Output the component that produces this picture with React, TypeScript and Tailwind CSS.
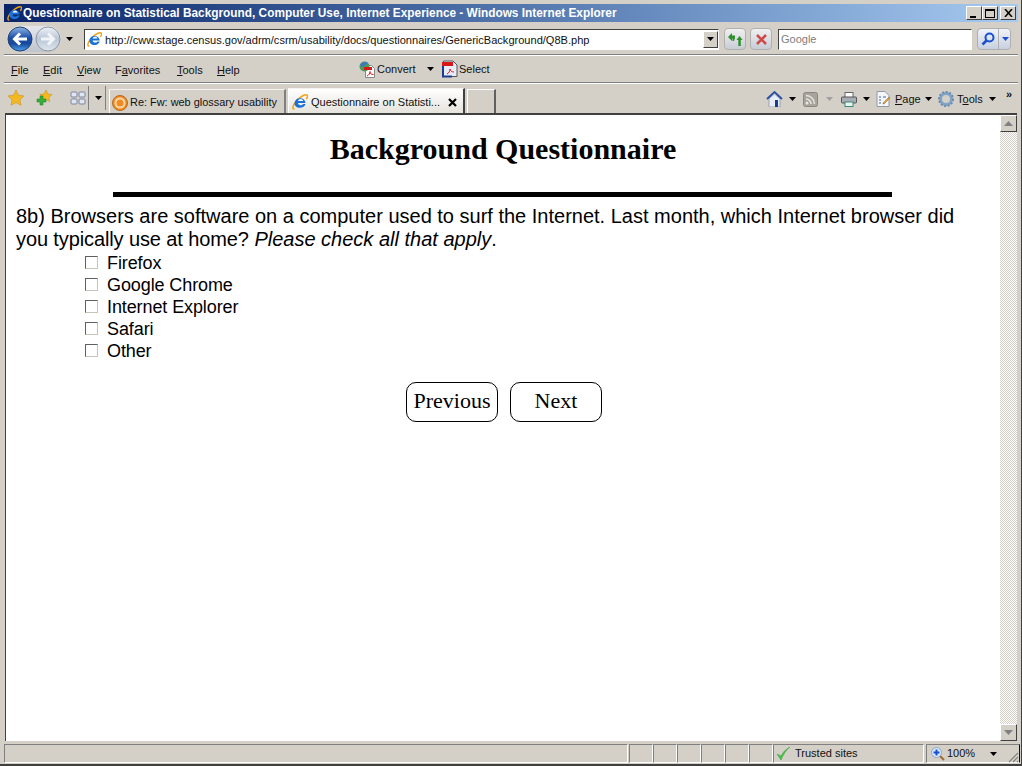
import React from "react";

const ui = "font-['Liberation_Sans',Arial,sans-serif]";

function IeLogo({ size = 16 }: { size?: number }) {
  return (
    <svg width={size} height={size} viewBox="0 0 16 16" className="shrink-0">
      <path d="M2.500 14.800C.2 15.400.4 12.500 2.800 9 5.800 4.600 11.500.4 14.600.9c1.500.3 1.100 2.200-.3 4.300" fill="none" stroke="#f0a010" strokeWidth="1.500" />
      <path d="M2.600 8.800A5.600 5.600 0 0 1 13.600 9H6c.3 2.600 3.600 3 5.200 1h2.400c-1.900 5.600-11.700 5-11-1.200z" fill="#1b72d6" />
      <path d="M6 7h5.200C10.800 4.300 6.500 4.300 6 7z" fill="#fff" />
    </svg>
  );
}

function Caret({ color = "#000", className = "" }: { color?: string; className?: string }) {
  return (
    <svg width="7" height="4" viewBox="0 0 7 4" className={`shrink-0 ${className}`}>
      <path d="M0 0h7L3.500 4z" fill={color} />
    </svg>
  );
}

function NavButton({ active }: { active: boolean }) {
  return (
    <svg width="26" height="26" viewBox="0 0 26 26" className="shrink-0">
      <defs>
        <linearGradient id="navB" x1="0" y1="0" x2="0" y2="1">
          <stop offset="0" stopColor="#8fb4e4" />
          <stop offset="0.45" stopColor="#1c4fa8" />
          <stop offset="0.7" stopColor="#174a9c" />
          <stop offset="1" stopColor="#4ea2ee" />
        </linearGradient>
        <linearGradient id="navG" x1="0" y1="0" x2="0" y2="1">
          <stop offset="0" stopColor="#eef2f6" />
          <stop offset="0.5" stopColor="#b9c6d6" />
          <stop offset="1" stopColor="#dfe7ef" />
        </linearGradient>
      </defs>
      <circle cx="13" cy="13" r="12" fill={active ? "url(#navB)" : "url(#navG)"} stroke={active ? "#23406f" : "#8d97a3"} />
      {active ? (
        <path d="M20 13H8M13 7.500 7.500 13l5.500 5.500" fill="none" stroke="#fff" strokeWidth="3" />
      ) : (
        <path d="M6 13h12M13 7.500l5.500 5.500-5.500 5.500" fill="none" stroke="#f2f5f8" strokeWidth="3" />
      )}
    </svg>
  );
}

function Mn({ k, rest, pre = "" }: { k: string; rest: string; pre?: string }) {
  return (
    <span>
      {pre}
      <span className="underline">{k}</span>
      {rest}
    </span>
  );
}

function CtlBtn({ children }: { children: React.ReactNode }) {
  return (
    <div className="w-[16px] h-[14px] bg-[#d4d0c8] border border-t-white border-l-white border-r-[#404040] border-b-[#404040] flex items-center justify-center">
      {children}
    </div>
  );
}

function PdfIcon() {
  return (
    <svg width="17" height="17" viewBox="0 0 17 17" className="shrink-0">
      <path d="M6.500 4.500h6l3 3v9h-9z" fill="#fff" stroke="#888" />
      <circle cx="5.500" cy="5.500" r="5" fill="#4a9a5a" />
      <path d="M1 4c2-3 6-4 8-2-2 1-3 3-6 4z" fill="#3a78c8" />
      <rect x="5" y="6" width="8" height="3" fill="#d81818" />
      <path d="M8 15c2-1 3-2.500 3-4.500 0 2 1 3 3.500 3" fill="none" stroke="#d81818" />
    </svg>
  );
}

function SelectIcon() {
  return (
    <svg width="16" height="18" viewBox="0 0 16 18" className="shrink-0">
      <path d="M1.500 1h9.500l4 4v11.500H1.500z" fill="#e8ecf8" stroke="#555" />
      <rect x="0" y="2" width="11" height="4" fill="#d81818" />
      <rect x="0" y="6" width="2" height="11" fill="#1c3c90" />
      <rect x="0" y="15.500" width="10" height="2" fill="#1c3c90" />
      <path d="M5 14c2-1 3-3 3-5 0 2 2 3 4 3" fill="none" stroke="#d81818" />
    </svg>
  );
}

function Tab({ active, icon, label, width }: { active?: boolean; icon: React.ReactNode; label: string; width: string }) {
  return (
    <div
      className={`${width} flex items-center border-r-2 border-l border-l-white border-t border-t-[#f4f2ee] ${
        active
          ? "h-[25px] border-r-[#404040] bg-gradient-to-b from-white to-[#e6e3dc] pl-[3px] pt-[2px]"
          : "h-[24px] border-r-[#808080] bg-[#d4d0c8] pl-[2px] pt-[2px]"
      }`}
    >
      {icon}
      <span className={`${active ? "ml-[3px] text-[11px]" : "ml-[2px] text-[10.93px]"} leading-none whitespace-nowrap text-[#111]`}>{label}</span>
      {active && (
        <svg width="9" height="9" viewBox="0 0 9 9" className="ml-[8px]">
          <path d="M1 1l7 7M8 1 1 8" stroke="#000" strokeWidth="2.200" />
        </svg>
      )}
    </div>
  );
}

function ScrollBtn({ down }: { down?: boolean }) {
  return (
    <div className="h-[17px] w-[17px] shrink-0 bg-[#d4d0c8] border border-t-white border-l-white border-r-[#404040] border-b-[#404040] flex items-center justify-center">
      <svg width="9" height="5" viewBox="0 0 9 5">
        <path d={down ? "M0 0h9L4.500 5z" : "M0 5h9L4.500 0z"} fill="#808080" />
      </svg>
    </div>
  );
}

const Cell = () => <div className="w-[24px] h-full border border-t-[#808080] border-l-[#808080] border-r-white border-b-white shrink-0" />;

function Check({ label }: { label: string }) {
  return (
    <label className="flex items-center h-[22px]">
      <span className="w-[13px] h-[13px] mb-[2px] bg-white border border-t-[#606060] border-l-[#606060] border-r-[#c8c4bc] border-b-[#c8c4bc] shrink-0" />
      <span className="ml-[9px] text-[18px] leading-[22px] tracking-[-0.1px] text-black">{label}</span>
    </label>
  );
}

function PageBtn({ label }: { label: string }) {
  return (
    <div className="w-[92px] h-[40px] pb-[2px] rounded-[10px] border border-black bg-white flex items-center justify-center font-['Liberation_Serif',serif] text-[22px] leading-none text-black">
      {label}
    </div>
  );
}

export default function App() {
  return (
    <div className={`${ui} w-[1022px] h-[766px] overflow-hidden bg-[#d4d0c8] flex flex-col pt-[4px] pl-[4px] pr-[3px] border-b-2 border-b-[#404040] border-r border-r-[#404040]`}>
      {/* Title bar */}
      <div className="h-[18px] shrink-0 flex items-center bg-gradient-to-r from-[#0a246a] to-[#a6caf0] pl-[3px]">
        <IeLogo size={15} />
        <span className="ml-[1px] pt-[1px] text-[11.85px] font-bold leading-none text-white whitespace-nowrap">
          Questionnaire on Statistical Background, Computer Use, Internet Experience - Windows Internet Explorer
        </span>
        <div className="ml-auto flex items-center mr-[2px]">
          <CtlBtn><div className="w-[6px] h-[2px] bg-black mt-[7px] mr-[2px]" /></CtlBtn>
          <CtlBtn><div className="w-[10px] h-[9px] border border-black border-t-2" /></CtlBtn>
          <div className="w-[2px]" />
          <CtlBtn>
            <svg width="9" height="8" viewBox="0 0 9 8"><path d="M1 0l7 8M8 0 1 8" stroke="#000" strokeWidth="1.500" /></svg>
          </CtlBtn>
        </div>
      </div>

      {/* Address row */}
      <div className="h-[33px] shrink-0 flex items-center border-b border-b-[#808080] pl-[3px] pt-[2px]">
        <div className="flex items-center rounded-full bg-gradient-to-b from-[#e4e7ec] to-[#c0c4cc]">
          <NavButton active />
          <div className="w-[2px]" />
          <NavButton active={false} />
        </div>
        <Caret className="ml-[5px]" />
        <div className="ml-[11px] w-[635px] h-[21px] bg-white border border-t-[#404040] border-l-[#404040] border-r-white border-b-white flex items-center">
          <div className="ml-[1px] w-[16px] h-[16px] flex items-center justify-center"><IeLogo size={15} /></div>
          <span className="ml-[3px] pt-[3px] text-[11.05px] leading-none whitespace-nowrap text-[#111]">
            http://cww.stage.census.gov/adrm/csrm/usability/docs/questionnaires/GenericBackground/Q8B.php
          </span>
          <div className="ml-auto w-[15px] h-[17px] bg-[#d4d0c8] border border-t-white border-l-white border-r-[#404040] border-b-[#404040] flex items-center justify-center">
            <Caret />
          </div>
        </div>
        <div className="ml-[5px] w-[22px] h-[22px] rounded-[4px] bg-gradient-to-b from-[#f0f0f0] to-[#c8ccd4] border border-[#b0b0b0] flex items-center justify-center">
          <svg width="15" height="13" viewBox="0 0 15 13">
            <path d="M0 4l4-4v2.500h3v2.500l-1 3H4.500V5.500H4V8zM14.500 7L11.500 3 8.500 7h1.800v6h2.500V7z" fill="#2f8f2f" />
          </svg>
        </div>
        <div className="ml-[4px] w-[22px] h-[22px] rounded-[4px] bg-gradient-to-b from-[#f0f0f0] to-[#c8ccd4] border border-[#b0b0b0] flex items-center justify-center">
          <svg width="11" height="11" viewBox="0 0 11 11"><path d="M1 1l9 9M10 1 1 10" stroke="#cc4a4a" strokeWidth="2.500" /></svg>
        </div>
        <div className="ml-[6px] w-[194px] h-[21px] bg-white border border-t-[#404040] border-l-[#404040] border-r-white border-b-white flex items-center pl-[2px] pt-[1px] text-[11px] text-[#808080]">
          Google
        </div>
        <div className="ml-[5px] w-[34px] h-[22px] rounded-[4px] bg-gradient-to-b from-[#f0f4fa] to-[#c8d0e0] border border-[#b0b0b0] flex items-center">
          <div className="w-[21px] h-full flex items-center justify-center border-r border-r-[#b0b0b0]">
            <svg width="14" height="14" viewBox="0 0 14 14">
              <circle cx="8.500" cy="5.500" r="4" fill="none" stroke="#1850d0" strokeWidth="2" />
              <path d="M5.500 8.500 1.500 12.500" stroke="#1850d0" strokeWidth="2.500" />
            </svg>
          </div>
          <Caret color="#1850d0" className="ml-[3px]" />
        </div>
      </div>

      {/* Menu row */}
      <div className="h-[28px] shrink-0 flex items-center border-t border-t-white border-b border-b-[#808080] text-[11px] leading-none text-[#111] pl-[7px]">
        <div className="w-[32px] pt-[2px]"><Mn k="F" rest="ile" /></div>
        <div className="w-[34px] pt-[2px]"><Mn k="E" rest="dit" /></div>
        <div className="w-[38px] pt-[2px]"><Mn k="V" rest="iew" /></div>
        <div className="w-[62px] pt-[2px]"><Mn pre="F" k="a" rest="vorites" /></div>
        <div className="w-[40px] pt-[2px]"><Mn k="T" rest="ools" /></div>
        <div className="w-[142px] pt-[2px]"><Mn k="H" rest="elp" /></div>
        <PdfIcon />
        <span className="ml-[1px] w-[50px]">Convert</span>
        <Caret />
        <div className="w-[8px]" />
        <SelectIcon />
        <span className="ml-[1px]">Select</span>
      </div>

      {/* Tab / command row */}
      <div className="h-[30px] shrink-0 flex items-end border-t border-t-white text-[11px] leading-none text-[#111] pl-[4px]">
        <div className="h-full flex items-center pb-[1px]">
          <svg width="16" height="16" viewBox="0 0 16 16"><path d="M8 0l2.400 5.200 5.600.7-4.100 3.800 1.100 5.600L8 12.500 3 15.300l1.100-5.600L0 5.900l5.600-.7z" fill="#f4b820" stroke="#c88810" strokeWidth="0.500" /></svg>
          <svg width="17" height="16" viewBox="0 0 17 16" className="ml-[12px]">
            <path d="M10 0l1.800 4 4.200.5-3.100 2.900.8 4.200L10 9.500 6 11.600l.8-4.200L3.700 4.500 8 4z" fill="#f4b820" stroke="#c88810" strokeWidth="0.500" />
            <path d="M4 6h3v3h3v3H7v3H4v-3H1V9h3z" fill="#38b038" stroke="#1f7a1f" strokeWidth="0.500" />
          </svg>
          <div className="ml-[14px] w-[22px] h-[24px] border-r border-r-[#808080] flex items-center justify-center">
            <svg width="16" height="14" viewBox="0 0 16 14">
              <g fill="#dfe6f2" stroke="#7a84a0"><rect x="1" y="1" width="6" height="5" rx="1" /><rect x="9" y="1" width="6" height="5" rx="1" /><rect x="1" y="8" width="6" height="5" rx="1" /><rect x="9" y="8" width="6" height="5" rx="1" /></g>
            </svg>
          </div>
          <div className="ml-[2px] w-[15px] h-[24px] border-r border-r-[#808080] flex items-center justify-center">
            <Caret />
          </div>
        </div>
        <div className="ml-[3px] flex items-end">
          <Tab
            width="w-[177px]"
            icon={
              <svg width="16" height="16" viewBox="0 0 16 16" className="shrink-0">
                <circle cx="8" cy="8" r="7.500" fill="#f08a24" stroke="#b86a20" />
                <circle cx="8" cy="8" r="4.500" fill="none" stroke="#fbd9a8" strokeWidth="2" />
              </svg>
            }
            label="Re: Fw: web glossary usability"
          />
          <div className="w-[2px]" />
          <Tab width="w-[177px]" active icon={<IeLogo size={16} />} label="Questionnaire on Statisti..." />
          <div className="w-[2px]" />
          <div className="w-[29px] h-[24px] border-t border-t-white border-l border-l-white border-r-2 border-r-[#606060]" />
        </div>
        <div className="ml-[270px] h-full flex items-center pb-[1px] pt-[2px]">
          <svg width="17" height="16" viewBox="0 0 17 16">
            <path d="M1 8 8.500 1 16 8" fill="none" stroke="#2a4ea0" strokeWidth="1.800" />
            <path d="M3 8v8h11V8L8.500 3z" fill="#e8eef8" stroke="#7a8ca8" strokeWidth="0.700" />
            <rect x="9" y="9" width="3" height="7" fill="#1c3c90" />
          </svg>
          <Caret className="ml-[6px]" />
          <svg width="15" height="15" viewBox="0 0 15 15" className="ml-[7px]">
            <rect x="0.500" y="0.500" width="14" height="14" rx="2" fill="#a8a49c" stroke="#8a8680" />
            <circle cx="4" cy="11" r="1.500" fill="#e8e6e0" />
            <path d="M3 7a5 5 0 0 1 5 5M3 3.500a8.500 8.500 0 0 1 8.500 8.500" fill="none" stroke="#e8e6e0" strokeWidth="1.500" />
          </svg>
          <Caret color="#a0a0a0" className="ml-[8px]" />
          <svg width="16" height="15" viewBox="0 0 16 15" className="ml-[8px]">
            <rect x="4" y="0.500" width="8" height="5" fill="#fff" stroke="#666" />
            <rect x="0.500" y="5" width="15" height="6" rx="1" fill="#a8acb4" stroke="#555" />
            <rect x="4" y="10" width="8" height="4.500" fill="#e8f4f0" stroke="#3a8a7a" />
          </svg>
          <Caret className="ml-[6px]" />
          <svg width="15" height="16" viewBox="0 0 15 16" className="ml-[6px]">
            <path d="M1 .5h8l4 4v11H1z" fill="#f6f6fa" stroke="#9098a8" />
            <path d="M3 6h2M3 9h2M3 12h2M7 6h3" stroke="#3a62b0" />
            <path d="M7 12l6-6 1 1-6 6H7z" fill="#e8a838" stroke="#806020" strokeWidth="0.500" />
          </svg>
          <span className="ml-[4px] w-[30px]"><Mn k="P" rest="age" /></span>
          <Caret />
          <svg width="16" height="16" viewBox="0 0 16 16" className="ml-[6px]">
            <circle cx="8" cy="8" r="5.500" fill="none" stroke="#7fa4c8" strokeWidth="3" />
            <circle cx="8" cy="8" r="7" fill="none" stroke="#6a8cae" strokeWidth="2" strokeDasharray="2 1.600" />
          </svg>
          <span className="ml-[3px] w-[32px]">T<span className="underline">o</span>ols</span>
          <Caret />
          <span className="ml-[10px] mb-[10px] text-[11px] font-bold leading-none">»</span>
        </div>
      </div>

      {/* Viewport */}
      <div className="h-[628px] shrink-0 ml-[1px] mr-[1px] flex bg-white border-t-2 border-t-[#404040] border-l border-l-[#404040]">
        <div className="flex-1 min-w-0 flex flex-col pl-[10px]">
          <h1 className="mt-[15px] text-center font-['Liberation_Serif',serif] font-bold text-[30px] leading-[37px] text-black pr-[10px]">
            Background Questionnaire
          </h1>
          <div className="mt-[25px] ml-[97px] w-[779px] h-[5px] bg-black" />
          <p className="mt-[8px] w-[960px] text-[20px] leading-[23px] text-black">
            8b) Browsers are software on a computer used to surf the Internet. Last month, which Internet browser did <span className="tracking-[-0.11px]">you typically use at home?</span> <em>Please check all that apply</em>.
          </p>
          <div className="mt-[1px] ml-[69px] flex flex-col">
            {["Firefox", "Google Chrome", "Internet Explorer", "Safari", "Other"].map((l) => (
              <Check key={l} label={l} />
            ))}
          </div>
          <div className="mt-[20px] ml-[390px] flex gap-[12px]">
            <PageBtn label="Previous" />
            <PageBtn label="Next" />
          </div>
        </div>
        <div className="w-[17px] shrink-0 flex flex-col bg-[repeating-conic-gradient(#d4d0c8_0_25%,#ffffff_0_50%)] bg-[length:2px_2px]">
          <ScrollBtn />
          <div className="flex-1" />
          <ScrollBtn down />
        </div>
      </div>

      {/* Status bar */}
      <div className="h-[23px] shrink-0 pt-[3px] pb-[1px] flex items-stretch text-[11px] leading-none text-[#111]">
        <div className="w-[624px] border border-t-[#808080] border-l-[#808080] border-r-white border-b-white shrink-0" />
        <div className="w-[1px] shrink-0" />
        <Cell /><Cell /><Cell /><Cell /><Cell /><Cell />
        <div className="w-[151px] shrink-0 border border-t-[#808080] border-l-[#808080] border-r-white border-b-white flex items-center pl-[2px]">
          <svg width="15" height="15" viewBox="0 0 15 15"><path d="M1 8l4 6C7 9 10 4 14 1 10 3 7 6 5 10z" fill="#48c048" stroke="#38a038" strokeWidth="0.500" /></svg>
          <span className="ml-[4px]">Trusted sites</span>
        </div>
        <div className="w-[2px] shrink-0" />
        <div className="flex-1 border border-t-[#808080] border-l-[#808080] border-b-white flex items-center pl-[4px]">
          <svg width="14" height="14" viewBox="0 0 14 14" className="shrink-0">
            <path d="M8 8l5 5" stroke="#a06a30" strokeWidth="2" />
            <circle cx="5.500" cy="5.500" r="5" fill="#d8e8fa" stroke="#8aa8d0" />
            <path d="M5.500 2.500v6M2.500 5.500h6" stroke="#1850d0" strokeWidth="2" />
          </svg>
          <span className="ml-[2px] w-[42px]">100%</span>
          <Caret className="ml-[1px]" />
          <svg width="12" height="12" viewBox="0 0 12 12" className="ml-[10px] mt-[6px]">
            <path d="M11 2 2 11M11 6l-5 5M11 10l-1 1" stroke="#808080" strokeWidth="1.200" />
          </svg>
        </div>
      </div>
    </div>
  );
}
